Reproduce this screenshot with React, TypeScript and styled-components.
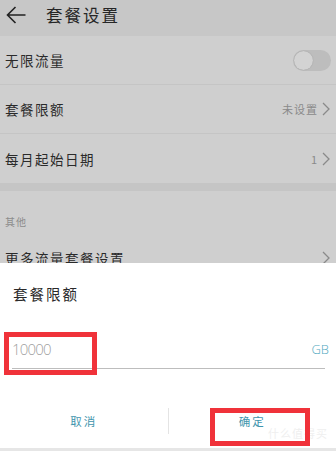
import * as React from 'react'
import styled, { createGlobalStyle } from 'styled-components'

const GlobalStyle = createGlobalStyle`
  html, body {
    margin: 0;
    padding: 0;
    background: #cfcfcf;
  }
  * { box-sizing: border-box; }
`

const Screen = styled.div`
  position: relative;
  width: 336px;
  height: 451px;
  overflow: hidden;
  background: #cfcfcf;
  font-family: "Noto Sans CJK SC", "Noto Sans", sans-serif;
  color: #2f2f2f;
`

const Header = styled.div`
  height: 36px;
  background: #c7c7c7;
  display: flex;
  align-items: center;
  padding-left: 6px;
  gap: 20px;
`

const Title = styled.div`
  font-size: 16.5px;
  letter-spacing: 2px;
  color: #262626;
  margin-top: -6px;
`

const Row = styled.div<{ $h?: number; $noLine?: boolean }>`
  height: ${p => p.$h ?? 49}px;
  display: flex;
  align-items: center;
  justify-content: space-between;
  padding: 0 6px 0 5px;
  border-bottom: ${p => (p.$noLine ? 'none' : '1px solid #c5c5c5')};
`

const Label = styled.div`
  font-size: 13.5px;
  letter-spacing: 1.5px;
  color: #2a2a2a;
`

const Right = styled.div`
  display: flex;
  align-items: center;
  gap: 4px;
  font-size: 11px;
  color: #8a8a8a;
  letter-spacing: 1px;
`

const Toggle = styled.div`
  width: 38px;
  height: 21px;
  border-radius: 11px;
  background: #bdbdbd;
  position: relative;
  margin-right: -1px;
  &::after {
    content: '';
    position: absolute;
    left: 1px;
    top: 1px;
    width: 19px;
    height: 19px;
    border-radius: 50%;
    background: #d3d3d3;
    box-shadow: 0 0 1px rgba(0,0,0,0.25);
  }
`

const Band = styled.div`
  height: 8px;
  background: #c5c5c5;
`

const SectionHead = styled.div`
  height: 42px;
  display: flex;
  align-items: flex-end;
  padding: 0 0 4px 5px;
  font-size: 10px;
  color: #8c8c8c;
  letter-spacing: 1px;
`

const Dialog = styled.div`
  position: absolute;
  left: 0;
  right: 0;
  top: 263px;
  bottom: 0;
  background: #ffffff;
  display: flex;
  flex-direction: column;
`

const DialogTitle = styled.div`
  font-size: 14.5px;
  letter-spacing: 2px;
  color: #2a2a2a;
  padding: 20px 0 0 13px;
  height: 60px;
`

const InputRow = styled.div`
  margin: 0 11px 0 12px;
  height: 46px;
  display: flex;
  align-items: center;
  justify-content: space-between;
  border-bottom: 1px solid #bdbdbd;
  padding-top: 6px;
`

const InputValue = styled.div`
  font-family: "Open Sans", "Liberation Sans", sans-serif;
  font-weight: 300;
  font-size: 15px;
  color: #9f9f9f;
  letter-spacing: -0.8px;
`

const Unit = styled.div`
  font-family: "Open Sans", "Liberation Sans", sans-serif;
  font-weight: 300;
  font-size: 13px;
  color: #4fa8c0;
  margin-right: -4px;
`

const Buttons = styled.div`
  margin-top: 36px;
  height: 32px;
  display: flex;
  align-items: center;
`

const Btn = styled.div`
  flex: 1;
  text-align: center;
  font-size: 11.5px;
  letter-spacing: 2px;
  color: #3f95ad;
`

const VDivider = styled.div`
  width: 1px;
  height: 26px;
  background: #e4e4e4;
`

const BottomLine = styled.div`
  position: absolute;
  left: 0;
  right: 0;
  bottom: 0;
  height: 3px;
  background: #e6e6e6;
`

const Mark = styled.div<{ $l: number; $t: number; $w: number; $h: number }>`
  position: absolute;
  left: ${p => p.$l}px;
  top: ${p => p.$t}px;
  width: ${p => p.$w}px;
  height: ${p => p.$h}px;
  border: 5px solid #f0323a;
  pointer-events: none;
`

const Watermark = styled.div`
  position: absolute;
  right: 8px;
  bottom: 10px;
  font-size: 11px;
  color: #efefef;
  letter-spacing: 1px;
`

const Chevron = ({ color = '#8a8a8a' }: { color?: string }) => (
  <svg width="8" height="14" viewBox="0 0 8 14">
    <path d="M1 1 L7 7 L1 13" fill="none" stroke={color} strokeWidth="1.3" />
  </svg>
)

const BackArrow = () => (
  <svg width="20" height="18" viewBox="0 0 20 18" style={{ marginTop: -6 }}>
    <path d="M19.5 9 H1.5 M9.5 1 L1.5 9 L9.5 17" fill="none" stroke="#222" strokeWidth="1.6" />
  </svg>
)

export default function App() {
  return (
    <>
      <GlobalStyle />
      <Screen>
        <Header>
          <BackArrow />
          <Title>套餐设置</Title>
        </Header>
        <Row>
          <Label>无限流量</Label>
          <Toggle />
        </Row>
        <Row>
          <Label>套餐限额</Label>
          <Right>
            未设置
            <Chevron />
          </Right>
        </Row>
        <Row $noLine>
          <Label>每月起始日期</Label>
          <Right>
            1
            <Chevron />
          </Right>
        </Row>
        <Band />
        <SectionHead>其他</SectionHead>
        <Row $noLine>
          <Label>更多流量套餐设置</Label>
          <Right>
            <Chevron />
          </Right>
        </Row>

        <Dialog>
          <DialogTitle>套餐限额</DialogTitle>
          <InputRow>
            <InputValue>10000</InputValue>
            <Unit>GB</Unit>
          </InputRow>
          <Buttons>
            <Btn>取消</Btn>
            <VDivider />
            <Btn>确定</Btn>
          </Buttons>
          <BottomLine />
          <Watermark>什么值得买</Watermark>
        </Dialog>

        <Mark $l={4} $t={332} $w={93} $h={43} />
        <Mark $l={210} $t={408} $w={100} $h={38} />
      </Screen>
    </>
  )
}
